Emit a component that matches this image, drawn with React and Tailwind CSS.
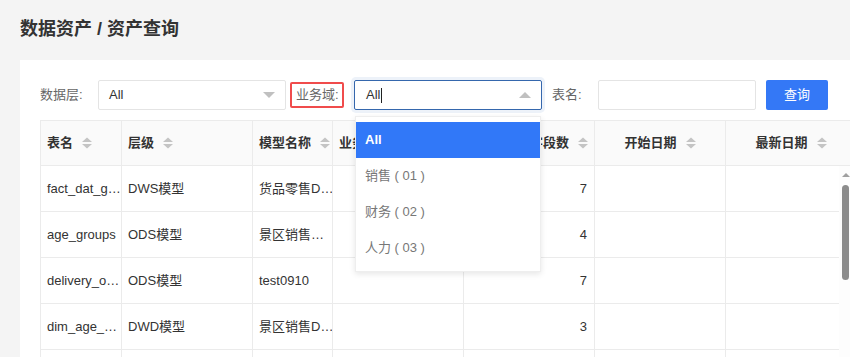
const rows = [
  { name: "fact_dat_g…", level: "DWS模型", model: "货品零售D…", count: 7 },
  { name: "age_groups", level: "ODS模型", model: "景区销售…", count: 4 },
  { name: "delivery_o…", level: "ODS模型", model: "test0910", count: 7 },
  { name: "dim_age_…", level: "DWD模型", model: "景区销售D…", count: 3 },
  { name: "", level: "", model: "", count: "" },
];

const cols = [
  { label: "表名", w: "w-[81px]", align: "left" },
  { label: "层级", w: "w-[131px]", align: "left" },
  { label: "模型名称", w: "w-[80px]", align: "left" },
  { label: "业务域", w: "w-[131px]", align: "left" },
  { label: "字段数", w: "w-[131px]", align: "right" },
  { label: "开始日期", w: "w-[131px]", align: "center" },
  { label: "最新日期", w: "w-[131px]", align: "center" },
];

function SortIcon() {
  return (
    <svg width="10" height="12" viewBox="0 0 10 12" className="shrink-0 ml-[9px]">
      <path d="M0 5 L5 0.5 L10 5 Z" fill="#c4c4c4" />
      <path d="M0 7 L5 11.5 L10 7 Z" fill="#c4c4c4" />
    </svg>
  );
}

function Arrow({ up }) {
  return (
    <svg width="14" height="8" viewBox="0 0 14 8" className="shrink-0">
      {up ? <path d="M1 7 L7 1 L13 7 Z" fill="#c0c0c0" /> : <path d="M1 1 L7 7 L13 1 Z" fill="#c0c0c0" />}
    </svg>
  );
}

const font = { fontFamily: '"Liberation Sans", "Noto Sans CJK SC", sans-serif' };

export default function App() {
  return (
    <div className="w-[850px] h-[357px] overflow-hidden bg-[#f4f4f4] text-[13px] text-[#333]" style={font}>
      <div className="h-[60px] pl-5 pt-[18px] text-[18px] font-bold text-[#333] leading-[22px]">数据资产 / 资产查询</div>
      <div className="ml-5 bg-white pl-5 pt-5 h-[297px]">
        <div className="flex items-center h-[30px]">
          <div className="w-[58px] text-[#666]">数据层:</div>
          <div className="w-[188px] h-[30px] border border-[#e4e4e4] rounded-[2px] flex items-center justify-between pl-[10px] pr-[9px]">
            <span>All</span>
            <Arrow />
          </div>
          <div className="ml-[4px] w-[54px] h-[26px] border-2 border-[#f04c4c] rounded-[2px] flex items-center pl-[4px] text-[#666]">业务域:</div>
          <div className="relative ml-[10px] w-[188px] h-[30px]">
            <div className="w-full h-full border border-[#3567ad] rounded-[2px] shadow-[0_0_0_3px_#edf2f9] flex items-center justify-between pl-[11px] pr-[9px]">
              <span className="flex items-center">All<span className="inline-block w-px h-[15px] bg-[#222] ml-[1px]"></span></span>
              <Arrow up />
            </div>
            <div className="absolute z-10 left-px top-[36px] w-[186px] bg-white border border-[#eeeeee] shadow-[0_2px_6px_rgba(0,0,0,0.1)] py-[5px]">
              <div className="h-[36px] flex items-center pl-[9px] bg-[#3178f8] text-white font-bold">All</div>
              <div className="h-[36px] flex items-center pl-[9px] text-[#777]">销售 ( 01 )</div>
              <div className="h-[36px] flex items-center pl-[9px] text-[#777]">财务 ( 02 )</div>
              <div className="h-[36px] flex items-center pl-[9px] text-[#777]">人力 ( 03 )</div>
            </div>
          </div>
          <div className="ml-[10px] w-[46px] text-[#666]">表名:</div>
          <div className="w-[158px] h-[30px] border border-[#e4e4e4] rounded-[2px]"></div>
          <button className="ml-[10px] w-[62px] h-[30px] rounded-[2px] bg-[#3478f6] text-white">查询</button>
        </div>
        <div className="mt-[10px] overflow-hidden">
          <div className="flex h-[46px] bg-[#fafafa] border-t border-[#ebebeb] w-[810px] overflow-hidden">
            {cols.map((c, i) => (
              <div
                key={i}
                className={`${c.w} shrink-0 border-l border-b border-[#ebebeb] flex items-center px-[6px] font-bold ${
                  c.align === "right" ? "justify-end" : c.align === "center" ? "justify-center" : "justify-start"
                }`}
              >
                <span className="whitespace-nowrap">{c.label}</span>
                <SortIcon />
              </div>
            ))}
          </div>
          <div className="flex">
            <div className="w-[799px] overflow-hidden">
              {rows.map((r, i) => (
                <div key={i} className="flex h-[46px]">
                  <div className="w-[81px] shrink-0 border-l border-b border-[#ebebeb] px-[6px] flex items-center whitespace-nowrap overflow-hidden">{r.name}</div>
                  <div className="w-[131px] shrink-0 border-l border-b border-[#ebebeb] px-[6px] flex items-center whitespace-nowrap">{r.level}</div>
                  <div className="w-[80px] shrink-0 border-l border-b border-[#ebebeb] px-[6px] flex items-center whitespace-nowrap overflow-hidden">{r.model}</div>
                  <div className="w-[131px] shrink-0 border-l border-b border-[#ebebeb]"></div>
                  <div className="w-[131px] shrink-0 border-l border-b border-[#ebebeb] px-[7px] flex items-center justify-end">{r.count}</div>
                  <div className="w-[131px] shrink-0 border-l border-b border-[#ebebeb]"></div>
                  <div className="w-[131px] shrink-0 border-l border-b border-[#ebebeb]"></div>
                </div>
              ))}
            </div>
            <div className="w-[11px] shrink-0 bg-[#fdfdfd] flex flex-col items-center pt-[6px]">
              <svg width="8" height="6" viewBox="0 0 8 6" className="ml-[2px]">
                <path d="M0 5 L4 1 L8 5 Z" fill="#a0a0a0" />
              </svg>
              <div className="mt-[7px] ml-[2px] w-[7px] h-[95px] rounded-[4px] bg-[#8c8c8c]"></div>
            </div>
          </div>
        </div>
      </div>
    </div>
  );
}
